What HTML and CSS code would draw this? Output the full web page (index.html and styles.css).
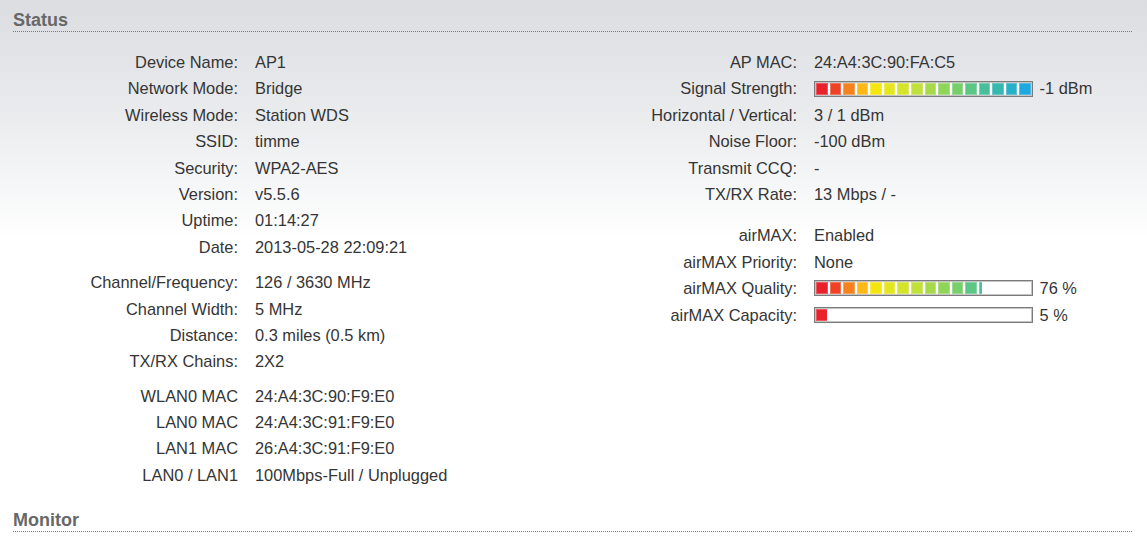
FILE: index.html
```html
<!DOCTYPE html>
<html lang="en">
<head>
    <meta charset="UTF-8">
    <title>Status</title>
    <link rel="stylesheet" href="styles.css">
</head>
<body>
    <div class="page">
        <h2 class="section-title">Status</h2>
        <div class="status">
            <!-- left column -->
            <div class="panel panel-left">
                <div class="group">
                    <div class="row"><span class="label">Device Name:</span><span class="value">AP1</span></div>
                    <div class="row"><span class="label">Network Mode:</span><span class="value">Bridge</span></div>
                    <div class="row"><span class="label">Wireless Mode:</span><span class="value">Station WDS</span></div>
                    <div class="row"><span class="label">SSID:</span><span class="value">timme</span></div>
                    <div class="row"><span class="label">Security:</span><span class="value">WPA2-AES</span></div>
                    <div class="row"><span class="label">Version:</span><span class="value">v5.5.6</span></div>
                    <div class="row"><span class="label">Uptime:</span><span class="value">01:14:27</span></div>
                    <div class="row"><span class="label">Date:</span><span class="value">2013-05-28 22:09:21</span></div>
                </div>
                <div class="group group-a">
                    <div class="row"><span class="label">Channel/Frequency:</span><span class="value">126 / 3630 MHz</span></div>
                    <div class="row"><span class="label">Channel Width:</span><span class="value">5 MHz</span></div>
                    <div class="row"><span class="label">Distance:</span><span class="value">0.3 miles (0.5 km)</span></div>
                    <div class="row"><span class="label">TX/RX Chains:</span><span class="value">2X2</span></div>
                </div>
                <div class="group group-b">
                    <div class="row"><span class="label">WLAN0 MAC</span><span class="value">24:A4:3C:90:F9:E0</span></div>
                    <div class="row"><span class="label">LAN0 MAC</span><span class="value">24:A4:3C:91:F9:E0</span></div>
                    <div class="row"><span class="label">LAN1 MAC</span><span class="value">26:A4:3C:91:F9:E0</span></div>
                    <div class="row"><span class="label">LAN0 / LAN1</span><span class="value">100Mbps-Full / Unplugged</span></div>
                </div>
            </div>
            <!-- right column -->
            <div class="panel panel-right">
                <div class="group">
                    <div class="row"><span class="label">AP MAC:</span><span class="value">24:A4:3C:90:FA:C5</span></div>
                    <div class="row"><span class="label">Signal Strength:</span><span class="value">
                        <span class="meter"><span class="meter-fill" style="width:100%"><span class="segs"><i></i><i></i><i></i><i></i><i></i><i></i><i></i><i></i><i></i><i></i><i></i><i></i><i></i><i></i><i></i><i></i></span></span></span>
                        <span class="meter-text">-1 dBm</span></span></div>
                    <div class="row"><span class="label">Horizontal / Vertical:</span><span class="value">3 / 1 dBm</span></div>
                    <div class="row"><span class="label">Noise Floor:</span><span class="value">-100 dBm</span></div>
                    <div class="row"><span class="label">Transmit CCQ:</span><span class="value">-</span></div>
                    <div class="row"><span class="label">TX/RX Rate:</span><span class="value">13 Mbps / -</span></div>
                </div>
                <div class="group group-c">
                    <div class="row"><span class="label">airMAX:</span><span class="value">Enabled</span></div>
                    <div class="row"><span class="label">airMAX Priority:</span><span class="value">None</span></div>
                    <div class="row"><span class="label">airMAX Quality:</span><span class="value">
                        <span class="meter"><span class="meter-fill" style="width:77%"><span class="segs"><i></i><i></i><i></i><i></i><i></i><i></i><i></i><i></i><i></i><i></i><i></i><i></i><i></i><i></i><i></i><i></i></span></span></span>
                        <span class="meter-text">76 %</span></span></div>
                    <div class="row"><span class="label">airMAX Capacity:</span><span class="value">
                        <span class="meter"><span class="meter-fill" style="width:5%"><span class="segs"><i></i><i></i><i></i><i></i><i></i><i></i><i></i><i></i><i></i><i></i><i></i><i></i><i></i><i></i><i></i><i></i></span></span></span>
                        <span class="meter-text">5 %</span></span></div>
                </div>
            </div>
        </div>
        <h2 class="section-title section-next">Monitor</h2>
    </div>
</body>
</html>
```

FILE: styles.css
```css
*{margin:0;padding:0;box-sizing:border-box;}
html,body{height:100%;}
body{
    background:#fff linear-gradient(#dbdde1 0, #eaecee 120px, #fff 240px) no-repeat;
    font-family:"Liberation Sans", Arial, sans-serif;
    font-size:16.4px;
    color:#353535;
}
.page{padding:10px 15px 0 13px;}

/* section headings with dotted rule */
.section-title{
    font-size:18px;
    font-weight:bold;
    color:#686868;
    line-height:21px;
    border-bottom:1px dotted #7a7a7a;
}
.section-next{margin-top:22px;}

.status{
    display:grid;
    grid-template-columns:560px 1fr;
    margin-top:17px;
}
.row{
    display:grid;
    height:26.4px;
    line-height:26.4px;
    column-gap:17px;
    white-space:nowrap;
}
.panel-left .row{grid-template-columns:225px 1fr;}
.panel-right .row{grid-template-columns:224px 1fr;}
.label{text-align:right;}
.group-a{margin-top:9px;}
.group-b{margin-top:8px;}
.group-c{margin-top:15px;}

/* segmented meter */
.meter{
    display:inline-block;
    vertical-align:middle;
    width:219px;
    height:16px;
    padding:1px;
    border:1px solid #7b7b7b;
    box-shadow:inset 0 0 0 1px #c4c4c4;
    background:#fff;
    margin-top:-3px;
}
.meter-fill{display:block;height:100%;overflow:hidden;}
.segs{display:flex;gap:2px;width:215px;height:100%;}
.segs i{flex:1;display:block;box-shadow:inset 0 0 0 1px rgba(255,255,255,.25);}
.segs i:nth-child(1){background:#e8212b;}
.segs i:nth-child(2){background:#ef4123;}
.segs i:nth-child(3){background:#f5821f;}
.segs i:nth-child(4){background:#fbb817;}
.segs i:nth-child(5){background:#f6e60f;}
.segs i:nth-child(6){background:#e4e71e;}
.segs i:nth-child(7){background:#d3e42b;}
.segs i:nth-child(8){background:#c0e03b;}
.segs i:nth-child(9){background:#a6da4b;}
.segs i:nth-child(10){background:#8ed55a;}
.segs i:nth-child(11){background:#76cf6b;}
.segs i:nth-child(12){background:#5cc684;}
.segs i:nth-child(13){background:#46bf9a;}
.segs i:nth-child(14){background:#36b8b0;}
.segs i:nth-child(15){background:#28b0c8;}
.segs i:nth-child(16){background:#1ca9e0;}
.meter-text{margin-left:2px;}
```
